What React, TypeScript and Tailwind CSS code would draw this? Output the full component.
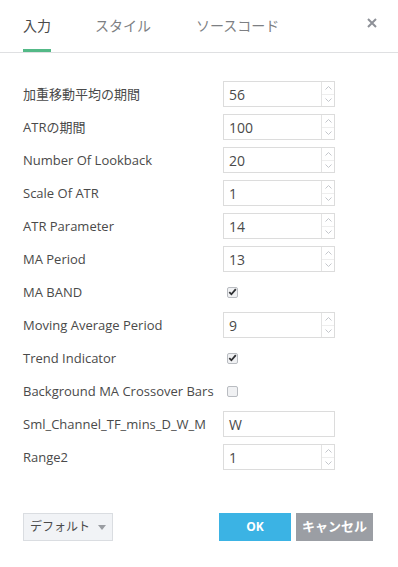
import React from "react";

const FONT = { fontFamily: '"Open Sans", "Noto Sans CJK JP", sans-serif' };

type Row =
  | { label: string; kind: "num"; value: string }
  | { label: string; kind: "text"; value: string }
  | { label: string; kind: "check"; checked: boolean };

const rows: Row[] = [
  { label: "加重移動平均の期間", kind: "num", value: "56" },
  { label: "ATRの期間", kind: "num", value: "100" },
  { label: "Number Of Lookback", kind: "num", value: "20" },
  { label: "Scale Of ATR", kind: "num", value: "1" },
  { label: "ATR Parameter", kind: "num", value: "14" },
  { label: "MA Period", kind: "num", value: "13" },
  { label: "MA BAND", kind: "check", checked: true },
  { label: "Moving Average Period", kind: "num", value: "9" },
  { label: "Trend Indicator", kind: "check", checked: true },
  { label: "Background MA Crossover Bars", kind: "check", checked: false },
  { label: "Sml_Channel_TF_mins_D_W_M", kind: "text", value: "W" },
  { label: "Range2", kind: "num", value: "1" },
];

function NumInput({ value }: { value: string }) {
  return (
    <div className="flex h-[26px] w-[112px] border border-[#dcdcdc] bg-white">
      <div className="flex flex-1 items-center pl-[5px] text-[14px] text-[#4a4a4a]">{value}</div>
      <div className="flex w-[13px] flex-col border-l border-[#e3e3e3]">
        <div className="flex flex-1 items-center justify-center border-b border-[#eeeeee]">
          <svg width="7" height="4" viewBox="0 0 7 4">
            <path d="M0.5 3.5 L3.5 0.5 L6.5 3.5" fill="none" stroke="#c4c7cc" strokeWidth="1" />
          </svg>
        </div>
        <div className="flex flex-1 items-center justify-center">
          <svg width="7" height="4" viewBox="0 0 7 4">
            <path d="M0.5 0.5 L3.5 3.5 L6.5 0.5" fill="none" stroke="#c4c7cc" strokeWidth="1" />
          </svg>
        </div>
      </div>
    </div>
  );
}

function TextInput({ value }: { value: string }) {
  return (
    <div className="flex h-[26px] w-[112px] items-center border border-[#dcdcdc] bg-white pl-[5px] text-[14px] text-[#4a4a4a]">
      {value}
    </div>
  );
}

function Check({ checked }: { checked: boolean }) {
  return (
    <div className="flex h-[26px] items-center pl-[4px]">
      <div className="flex h-[11px] w-[11px] items-center justify-center rounded-[2px] border border-[#b9bcc1] bg-[#f0f1f3]">
        {checked && (
          <svg width="9" height="8" viewBox="0 0 9 8">
            <path d="M1.3 4.2 L3.4 6.3 L7.8 1.2" fill="none" stroke="#2f3033" strokeWidth="1.8" />
          </svg>
        )}
      </div>
    </div>
  );
}

export default function App() {
  return (
    <div className="h-[567px] w-[398px] bg-white" style={FONT}>
      <div className="flex h-[53px] items-stretch border-b border-[#dfe0e2] pl-[23px] pr-[21px]">
        <div className="flex w-[28px] flex-col">
          <div className="flex flex-1 items-center pt-[1px] text-[14px] text-[#4a4a4a]">入力</div>
          <div className="h-[3px] bg-[#53b987]" />
        </div>
        <div className="ml-[44px] flex items-center pb-[2px] text-[14px] text-[#7d7f83]">スタイル</div>
        <div className="ml-[45px] flex items-center pb-[2px] text-[14px] text-[#7d7f83]">ソースコード</div>
        <div className="ml-auto flex items-center pb-[7px]">
          <svg width="10" height="10" viewBox="0 0 10 10">
            <path d="M1 1 L9 9 M9 1 L1 9" stroke="#8e9198" strokeWidth="2" />
          </svg>
        </div>
      </div>

      <div className="flex flex-col gap-[7px] pl-[23px] pt-[28px]">
        {rows.map((r) => (
          <div key={r.label} className="flex h-[26px] items-center">
            <div className="w-[200px] pt-[1px] text-[13px] text-[#4a4a4a]">{r.label}</div>
            {r.kind === "num" && <NumInput value={r.value} />}
            {r.kind === "text" && <TextInput value={r.value} />}
            {r.kind === "check" && <Check checked={r.checked} />}
          </div>
        ))}
      </div>

      <div className="mt-[43px] flex items-center pl-[23px] pr-[25px]">
        <div className="flex h-[28px] w-[90px] items-center justify-center gap-[8px] border border-[#dadde1] bg-[#f1f3f6] text-[12px] text-[#4a4a4a]">
          <span>デフォルト</span>
          <svg width="8" height="5" viewBox="0 0 8 5">
            <path d="M0 0 L8 0 L4 5 Z" fill="#9a9da2" />
          </svg>
        </div>
        <div className="ml-auto flex h-[28px] w-[72px] items-center justify-center bg-[#3bb3e4] text-[12px] font-bold text-white">
          OK
        </div>
        <div className="ml-[5px] flex h-[28px] w-[77px] items-center justify-center bg-[#9b9ea4] text-[13px] font-bold text-white">
          キャンセル
        </div>
      </div>
    </div>
  );
}
